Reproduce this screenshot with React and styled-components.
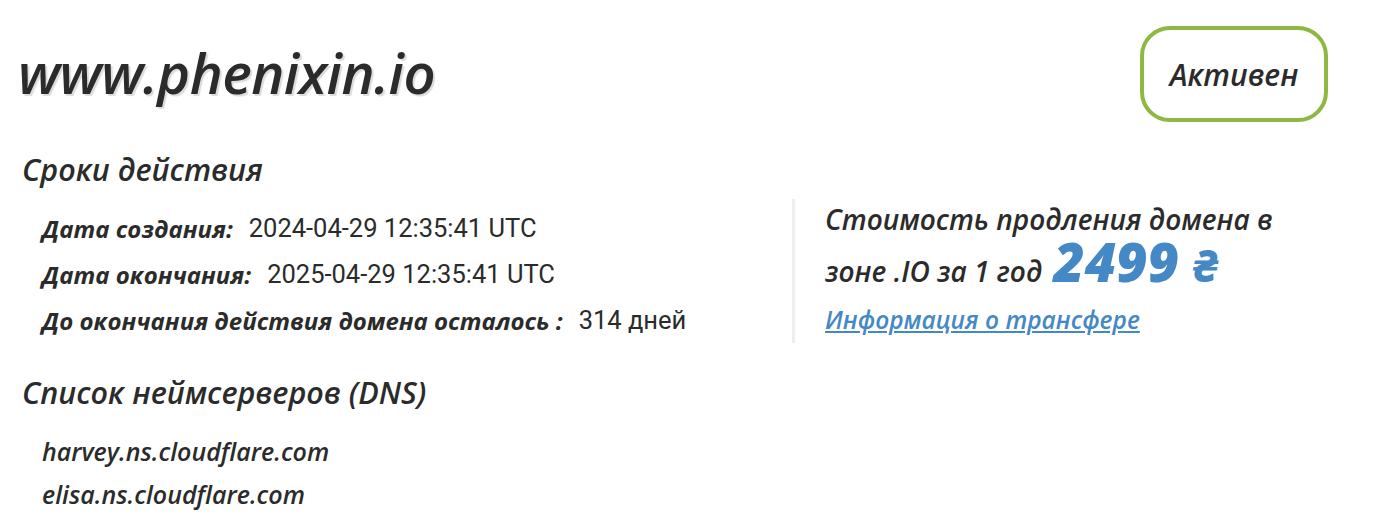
import React from 'react'
import styled, { createGlobalStyle } from 'styled-components'

const GlobalStyle = createGlobalStyle`
    body {
        margin: 0;
        background: #fff;
        font-family: "Open Sans", "Noto Sans", sans-serif;
        color: #2b2b2b;
    }
`

const dates = [
    { label: 'Дата создания:', value: '2024-04-29 12:35:41 UTC' },
    { label: 'Дата окончания:', value: '2025-04-29 12:35:41 UTC' },
    { label: 'До окончания действия домена осталось :', value: '314 дней' },
]

const servers = ['harvey.ns.cloudflare.com', 'elisa.ns.cloudflare.com']

function App() {
    return (
        <Page>
            <GlobalStyle />
            <Header>
                <Domain>www.phenixin.io</Domain>
                <Status>Активен</Status>
            </Header>
            <Body>
                <LeftCol>
                    <SectionTitle>Сроки действия</SectionTitle>
                    <List>
                        {dates.map((d) => (
                            <Row key={d.label}>
                                <Label>{d.label}</Label>
                                <Value>{d.value}</Value>
                            </Row>
                        ))}
                    </List>
                </LeftCol>
                <Price>
                    <PriceText>
                        Стоимость продления домена в зоне .IO за 1 год <Amount>2499 <Currency>₴</Currency></Amount>
                    </PriceText>
                    <TransferLink href="#">Информация о трансфере</TransferLink>
                </Price>
            </Body>
            <DnsBlock>
                <SectionTitle>Список неймсерверов (DNS)</SectionTitle>
                <ServerList>
                    {servers.map((s) => (
                        <Server key={s}>{s}</Server>
                    ))}
                </ServerList>
            </DnsBlock>
        </Page>
    )
}

const Page = styled.div`
    width: 1382px;
    height: 522px;
    overflow: hidden;
    padding-top: 26px;
    box-sizing: border-box;
`

const Header = styled.div`
    display: flex;
    justify-content: space-between;
    align-items: flex-start;
    padding: 0 54px 0 18px;
`

const Domain = styled.h1`
    margin: 10px 0 0;
    font-size: 56px;
    line-height: 72px;
    font-weight: 600;
    font-style: italic;
    letter-spacing: -0.5px;
    color: #2b2b2b;
    text-shadow: 2px 2px 1px #dcdcdc;
`

const Status = styled.div`
    width: 188px;
    height: 96px;
    box-sizing: border-box;
    border: 4px solid #8fb843;
    border-radius: 30px;
    display: flex;
    align-items: center;
    justify-content: center;
    font-size: 30px;
    font-style: italic;
    font-weight: 600;
    color: #2b2b2b;
`

const Body = styled.div`
    display: flex;
    align-items: flex-start;
    margin-top: 27px;
`

const LeftCol = styled.div`
    width: 770px;
    padding-left: 22px;
`

const SectionTitle = styled.h2`
    margin: 0;
    font-size: 30.5px;
    line-height: 40px;
    font-weight: 600;
    font-style: italic;
    color: #2b2b2b;
`

const List = styled.div`
    display: flex;
    flex-direction: column;
    padding-left: 20px;
    margin-top: 16px;
`

const Row = styled.div`
    display: flex;
    align-items: center;
    gap: 16px;
    height: 46px;
`

const Label = styled.span`
    font-size: 24px;
    font-weight: 700;
    font-style: italic;
`

const Value = styled.span`
    font-family: "Roboto", sans-serif;
    font-size: 25.5px;
    color: #2b2b2b;
`

const Price = styled.div`
    margin-top: 50px;
    border-left: 3px solid #eeeeee;
    padding: 0 0 0 30px;
    height: 144px;
    box-sizing: border-box;
`

const PriceText = styled.div`
    width: 470px;
    margin-top: -6px;
    font-size: 28px;
    line-height: 52px;
    font-weight: 600;
    font-style: italic;
    color: #2b2b2b;
`

const Amount = styled.span`
    margin-left: 4px;
    font-size: 54px;
    line-height: 0;
    font-weight: 800;
    color: #4588c6;
`

const Currency = styled.span`
    font-size: 44px;
`

const TransferLink = styled.a`
    display: block;
    margin-top: 8px;
    font-size: 24.5px;
    line-height: 30px;
    font-weight: 600;
    font-style: italic;
    color: #4588c6;
`

const DnsBlock = styled.div`
    padding-left: 22px;
    margin-top: 29px;
`

const ServerList = styled.div`
    padding-left: 20px;
    margin-top: 18px;
`

const Server = styled.div`
    font-size: 25px;
    line-height: 43px;
    font-weight: 600;
    font-style: italic;
    color: #2b2b2b;
`

export default App
